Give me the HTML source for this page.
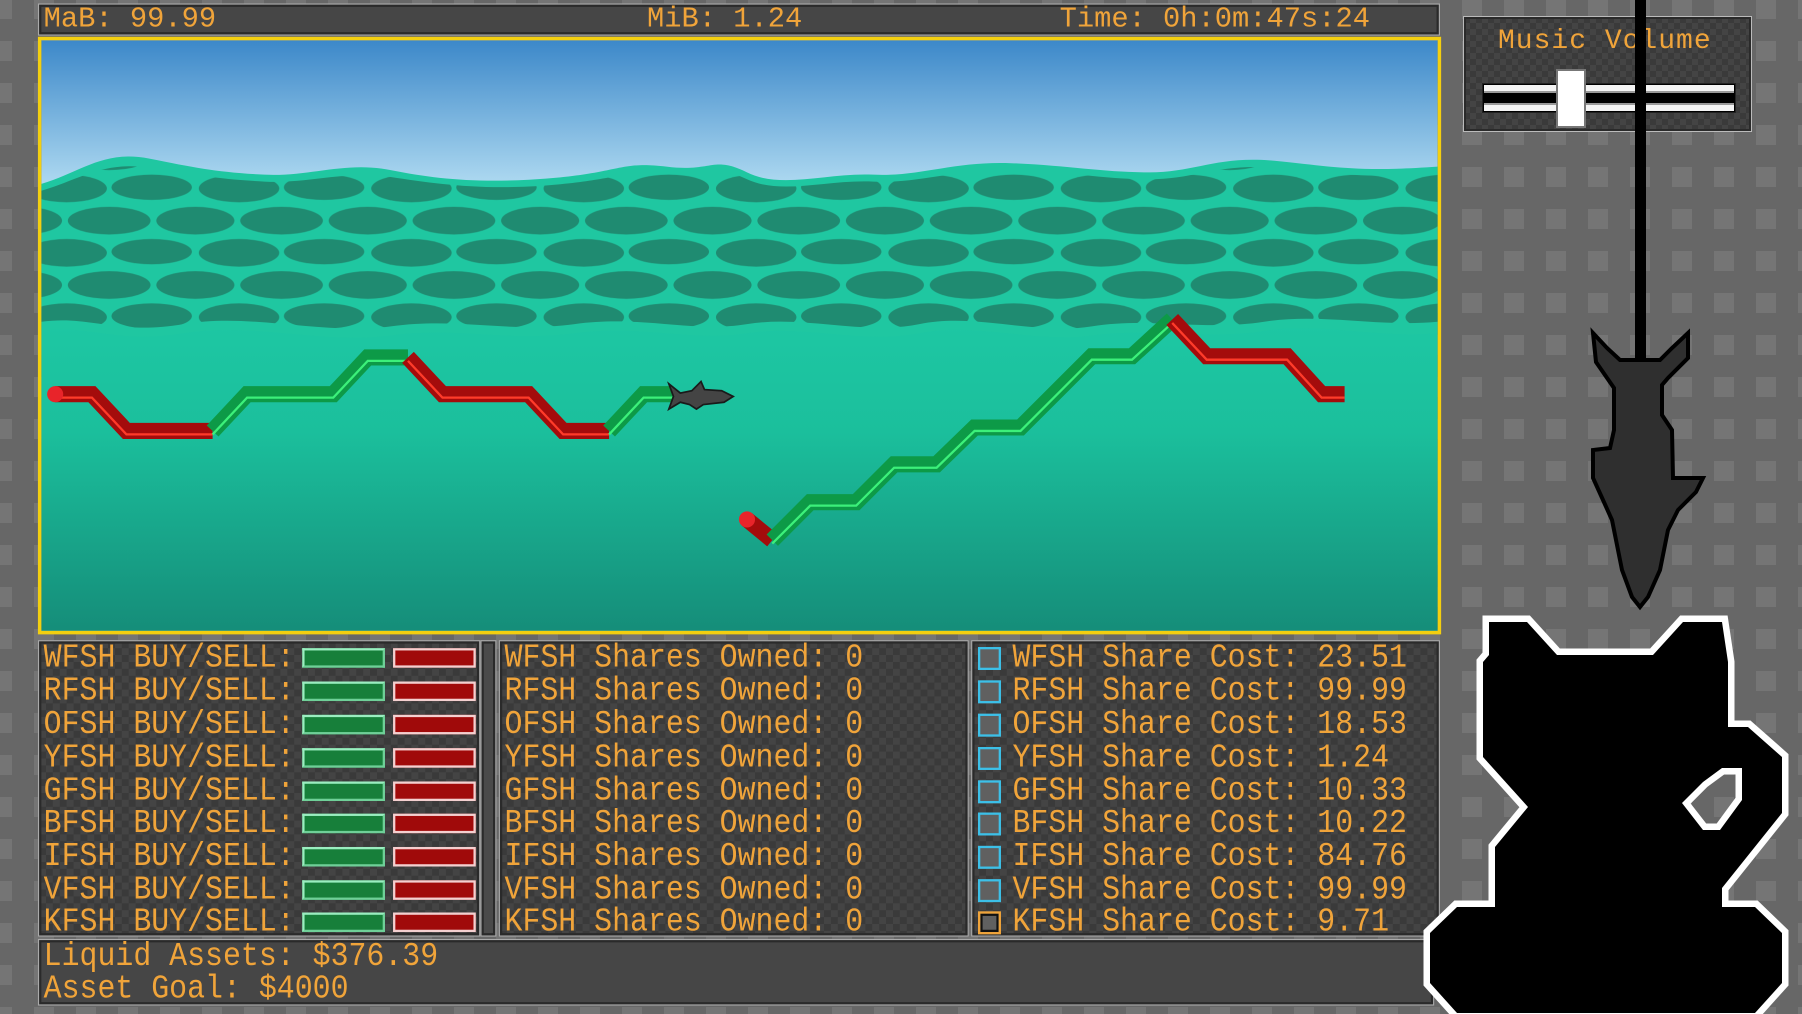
<!DOCTYPE html>
<html><head><meta charset="utf-8">
<style>
*{margin:0;padding:0;box-sizing:border-box}
html,body{width:1802px;height:1014px;overflow:hidden}
body{position:relative;background-color:#676767}
#bg{position:absolute;left:0;top:0;width:1802px;height:1014px;background-color:#676767;
background-image:conic-gradient(from 0deg at 20px 20px,#676767 0 75%,#757575 75% 100%);
background-size:42px 42px;background-position:-8px -1px}
#main{position:absolute;left:0;top:0;width:1568px;height:882px;transform:scale(1.14923);transform-origin:0 0}
.mono{font-family:"Liberation Mono","DejaVu Sans Mono",monospace;color:#f0a43a}
.chk{background-color:#3b3b3b;background-image:conic-gradient(#444 0 25%,#3a3a3a 0 50%,#444 0 75%,#3a3a3a 0);background-size:12px 12px}
.box{position:absolute;border:1px solid #aaa;box-shadow:inset 0 0 0 2px #2a2a2a}
.row{position:absolute;left:4px;font-size:26px;line-height:29px;height:29px;white-space:pre;transform:scaleY(1.12);transform-origin:0 50%}
.g{position:absolute;width:72px;height:17px;background:#177f3a;border:2px solid #8fe8b0;border-color:#9aeec0 #6fd098 #6fd098 #9aeec0}
.r{position:absolute;width:72px;height:17px;background:#a00a0a;border:2px solid #f4d0d0}
.cb{position:absolute;left:5px;width:20px;height:20px;border:2px solid #3cc0e8;background:#606060}
</style></head><body>
<div id="bg"></div>
<div id="main">
  <div class="box chk mono" style="left:33px;top:3px;width:1220px;height:28px;background:#464646;font-size:25px;line-height:26px;">
    <span style="position:absolute;left:4px;top:0">MaB: 99.99</span>
    <span style="position:absolute;left:529px;top:0">MiB: 1.24</span>
    <span style="position:absolute;left:888px;top:0">Time: 0h:0m:47s:24</span>
  </div>
  <div style="position:absolute;left:33px;top:32px;width:1221px;height:520px;border:3px solid #f3cf10;box-shadow:inset 0 0 0 1px #fff39a;overflow:hidden">
  <svg width="1215" height="514" viewBox="36 35 1215 514" style="display:block">
    <defs>
      <linearGradient id="sky" x1="0" y1="0" x2="0" y2="1"><stop offset="0" stop-color="#3c88c9"/><stop offset="1" stop-color="#b2dcf2"/></linearGradient>
      <linearGradient id="sea" x1="0" y1="0" x2="0" y2="1"><stop offset="0" stop-color="#1ec9a5"/><stop offset="0.4" stop-color="#1bbf9c"/><stop offset="1" stop-color="#158d79"/></linearGradient>
      <pattern id="blobs" x="20" y="150" width="150" height="56" patternUnits="userSpaceOnUse">
        <rect width="150" height="56" fill="#1fc7a1"/>
        <ellipse cx="38" cy="14" rx="35" ry="12" fill="#1f8b71"/>
        <ellipse cx="112" cy="13" rx="35" ry="11" fill="#1f8b71"/>
        <ellipse cx="0" cy="42" rx="34" ry="12" fill="#1f8b71"/>
        <ellipse cx="75" cy="42" rx="36" ry="12" fill="#1f8b71"/>
        <ellipse cx="150" cy="42" rx="34" ry="12" fill="#1f8b71"/>
      </pattern>
    </defs>
    <rect x="36" y="35" width="1215" height="130" fill="url(#sky)"/>
    <rect x="36" y="260" width="1215" height="290" fill="url(#sea)"/>
    <path d="M36,160 C70,150 90,130 130,138 S190,150 230,152 S300,140 340,148 S420,160 480,155 S540,140 580,145 S620,135 650,150 S720,150 760,152 S830,140 880,142 S960,150 1000,150 S1060,135 1110,140 S1180,150 1251,145 L1251,290 C1200,295 1150,280 1100,288 S1000,285 950,292 S850,280 800,290 S700,282 650,290 S560,282 500,290 S400,284 340,292 S220,280 160,290 S80,282 36,288 Z" fill="#1fc7a1"/>
    <path d="M36,166 C70,156 90,140 130,146 S190,156 230,158 S300,148 340,154 S420,166 480,161 S540,148 580,151 S620,142 650,156 S720,156 760,158 S830,147 880,148 S960,156 1000,156 S1060,142 1110,146 S1180,156 1251,151 L1251,280 C1200,285 1150,272 1100,280 S1000,276 950,284 S850,272 800,282 S700,274 650,282 S560,274 500,282 S400,276 340,284 S220,272 160,282 S80,274 36,280 Z" fill="url(#blobs)"/>
    <g fill="none" stroke-linejoin="miter" stroke-linecap="butt">
      <polyline points="48,343 80,343 110,375 185,375" stroke="#a40c0c" stroke-width="14"/>
      <polyline points="48,346 80,346 110,378 185,378" stroke="#ff3b2a" stroke-width="2"/>
      <polyline points="185,375 215,343 290,343 320,311 355,311" stroke="#0d9a47" stroke-width="14"/>
      <polyline points="185,378 215,346 290,346 320,314 355,314" stroke="#3cf07a" stroke-width="2"/>
      <polyline points="355,311 385,343 460,343 490,375 530,375" stroke="#a40c0c" stroke-width="14"/>
      <polyline points="355,314 385,346 460,346 490,378 530,378" stroke="#ff3b2a" stroke-width="2"/>
      <polyline points="530,375 560,343 585,343" stroke="#0d9a47" stroke-width="14"/>
      <polyline points="530,378 560,346 585,346" stroke="#3cf07a" stroke-width="2"/>
      <polyline points="650,452 672,470" stroke="#a40c0c" stroke-width="14"/>
      <polyline points="672,470 705,437 745,437 778,404 815,404 848,372 888,372 950,310 985,310 1020,278" stroke="#0d9a47" stroke-width="14"/>
      <polyline points="672,473 705,440 745,440 778,407 815,407 848,375 888,375 950,313 985,313 1020,281" stroke="#3cf07a" stroke-width="2"/>
      <polyline points="1020,278 1050,310 1120,310 1150,343 1170,343" stroke="#a40c0c" stroke-width="14"/>
      <polyline points="1020,281 1050,313 1120,313 1150,346 1170,346" stroke="#ff3b2a" stroke-width="2"/>
    </g>
    <circle cx="48" cy="343" r="7" fill="#e8242a"/>
    <circle cx="650" cy="452" r="7" fill="#e8242a"/>
    <path d="M582,334 L592,342 L602,340 L610,332 L613,339 L628,340 L638,345 L630,350 L612,352 L606,356 L600,352 L592,350 L582,356 L586,345 Z" fill="#444" stroke="#1a1a1a" stroke-width="1.5"/>
  </svg>
  </div>

  <div class="box chk mono" style="left:33px;top:557px;width:385px;height:258px">
    <div class="row" style="top:0">WFSH BUY/SELL:</div>
    <div class="row" style="top:29px">RFSH BUY/SELL:</div>
    <div class="row" style="top:58px">OFSH BUY/SELL:</div>
    <div class="row" style="top:87px">YFSH BUY/SELL:</div>
    <div class="row" style="top:116px">GFSH BUY/SELL:</div>
    <div class="row" style="top:144px">BFSH BUY/SELL:</div>
    <div class="row" style="top:173px">IFSH BUY/SELL:</div>
    <div class="row" style="top:202px">VFSH BUY/SELL:</div>
    <div class="row" style="top:230px">KFSH BUY/SELL:</div>
    <div class="g" style="left:229px;top:6px"></div><div class="r" style="left:308px;top:6px"></div>
    <div class="g" style="left:229px;top:35px"></div><div class="r" style="left:308px;top:35px"></div>
    <div class="g" style="left:229px;top:64px"></div><div class="r" style="left:308px;top:64px"></div>
    <div class="g" style="left:229px;top:93px"></div><div class="r" style="left:308px;top:93px"></div>
    <div class="g" style="left:229px;top:122px"></div><div class="r" style="left:308px;top:122px"></div>
    <div class="g" style="left:229px;top:150px"></div><div class="r" style="left:308px;top:150px"></div>
    <div class="g" style="left:229px;top:179px"></div><div class="r" style="left:308px;top:179px"></div>
    <div class="g" style="left:229px;top:208px"></div><div class="r" style="left:308px;top:208px"></div>
    <div class="g" style="left:229px;top:236px"></div><div class="r" style="left:308px;top:236px"></div>
  </div>
  <div class="box" style="left:418px;top:557px;width:14px;height:258px;background:#4a4a4a"></div>
  <div class="box chk mono" style="left:434px;top:557px;width:409px;height:258px">
    <div class="row" style="top:0">WFSH Shares Owned: 0</div>
    <div class="row" style="top:29px">RFSH Shares Owned: 0</div>
    <div class="row" style="top:58px">OFSH Shares Owned: 0</div>
    <div class="row" style="top:87px">YFSH Shares Owned: 0</div>
    <div class="row" style="top:116px">GFSH Shares Owned: 0</div>
    <div class="row" style="top:144px">BFSH Shares Owned: 0</div>
    <div class="row" style="top:173px">IFSH Shares Owned: 0</div>
    <div class="row" style="top:202px">VFSH Shares Owned: 0</div>
    <div class="row" style="top:230px">KFSH Shares Owned: 0</div>
  </div>
  <div class="box chk mono" style="left:845px;top:557px;width:408px;height:258px">
    <div class="cb" style="top:5px"></div><div class="row" style="left:35px;top:0">WFSH Share Cost: 23.51</div>
    <div class="cb" style="top:34px"></div><div class="row" style="left:35px;top:29px">RFSH Share Cost: 99.99</div>
    <div class="cb" style="top:63px"></div><div class="row" style="left:35px;top:58px">OFSH Share Cost: 18.53</div>
    <div class="cb" style="top:92px"></div><div class="row" style="left:35px;top:87px">YFSH Share Cost: 1.24</div>
    <div class="cb" style="top:121px"></div><div class="row" style="left:35px;top:116px">GFSH Share Cost: 10.33</div>
    <div class="cb" style="top:149px"></div><div class="row" style="left:35px;top:144px">BFSH Share Cost: 10.22</div>
    <div class="cb" style="top:178px"></div><div class="row" style="left:35px;top:173px">IFSH Share Cost: 84.76</div>
    <div class="cb" style="top:207px"></div><div class="row" style="left:35px;top:202px">VFSH Share Cost: 99.99</div>
    <div class="cb" style="top:235px;border-color:#f0a43a;box-shadow:inset 0 0 0 2px #111"></div><div class="row" style="left:35px;top:230px">KFSH Share Cost: 9.71</div>
  </div>
  <div class="box mono" style="left:33px;top:817px;width:1215px;height:58px;background:#464646">
    <div class="row" style="top:0">Liquid Assets: $376.39</div>
    <div class="row" style="top:28px">Asset Goal: $4000</div>
  </div>
</div>

<div class="box chk mono" style="left:1463px;top:16px;width:289px;height:116px;border-color:#bbb">
  <div style="position:absolute;left:34px;top:10px;font-size:28px;letter-spacing:1px;line-height:30px">Music Volume</div>
  <div style="position:absolute;left:18px;top:66px;width:254px;height:30px;background:#000;border:1px solid #222">
    <div style="position:absolute;left:1px;right:1px;top:1px;height:8px;background:#f4f4f4;border-bottom:2px solid #999"></div>
    <div style="position:absolute;left:1px;right:1px;bottom:1px;height:8px;background:#f4f4f4;border-top:2px solid #999"></div>
  </div>
  <div style="position:absolute;left:92px;top:52px;width:30px;height:59px;background:#fff;border:2px solid #777"></div>
</div>
<div style="position:absolute;left:1635px;top:0;width:11px;height:362px;background:#000"></div>

<svg style="position:absolute;left:0;top:0" width="1802" height="1014">
  <path d="M1593,333 L1607,348 L1620,360 L1660,360 L1672,348 L1688,333 L1688,358 L1668,378 L1662,385 L1662,415 L1672,430 L1673,478 L1703,478 L1696,492 L1678,510 L1668,530 L1660,570 L1648,597 L1640,607 L1632,597 L1622,570 L1612,520 L1603,500 L1593,478 L1593,450 L1610,448 L1614,430 L1614,388 L1605,375 L1596,362 Z" fill="#2f2f2f" stroke="#000" stroke-width="4"/>
  <path d="M1489,622 L1527,622 L1557,655 L1653,655 L1683,622 L1722,622 L1728,662 L1728,727 L1748,727 L1782,757 L1782,813 L1722,888 L1722,907 L1755,907 L1782,933 L1782,983 L1755,1013 L1457,1013 L1430,983 L1430,933 L1457,907 L1495,907 L1495,847 L1528,807 L1483,757 L1483,662 L1489,655 Z M1722,768 L1703,782 L1682,803 L1703,830 L1720,830 L1742,800 L1742,768 Z" fill="#000" fill-rule="evenodd" stroke="#fff" stroke-width="13" stroke-linejoin="miter" paint-order="stroke"/>
</svg>
</body></html>
